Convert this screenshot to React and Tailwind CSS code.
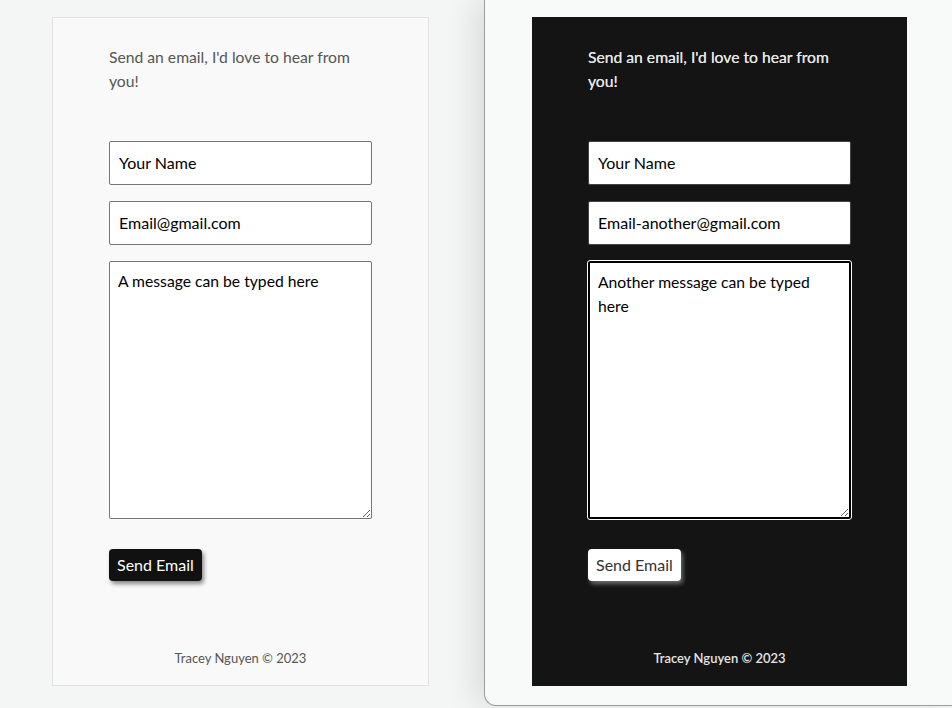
import React from 'react';

const FONT = { fontFamily: 'Lato, "Open Sans", sans-serif' };

function ContactCard({ dark, email, message }) {
  const field = `h-[44px] px-[9px] pb-[2px] text-[16px] text-black bg-white border rounded-[2px] outline-none ${
    dark ? 'border-[#444]' : 'border-[#767676]'
  }`;

  return (
    <div
      className={`flex flex-col h-[669px] ${
        dark
          ? 'w-[375px] pt-[28px] pb-[19px] bg-[#141414]'
          : 'w-[377px] pt-[27px] pb-[18px] bg-[#f9f9f9] border border-[#e2e2e2]'
      }`}
    >
      <div className="pl-[56px]">
        <p
          className={`w-[263px] text-[15.7px] leading-[24px] ${
            dark ? 'text-[#e6e6e6] [text-shadow:0_0_0.4px_#e6e6e6]' : 'text-[#555]'
          }`}
        >
          Send an email, I'd love to hear from you!
        </p>

        <form className="mt-[48px] flex flex-col gap-4 w-[263px]" onSubmit={e => e.preventDefault()}>
          <input type="text" defaultValue="Your Name" className={field} />
          <input type="email" defaultValue={email} className={field} />
          <textarea
            defaultValue={message}
            className={`h-[258px] px-[8px] pt-[7px] pb-[8px] text-[15.7px] leading-[24px] text-black bg-white rounded-[2px] ${
              dark
                ? 'border-2 border-black outline outline-1 outline-white'
                : 'border border-[#767676] outline-none'
            }`}
          />
          <div className="pt-[14px]">
            <button
              type="submit"
              className={`px-2 py-1 text-[16px] leading-[24px] rounded-[4px] ${
                dark
                  ? 'bg-white text-[#333] shadow-[2px_3px_4px_rgba(180,180,180,0.55)]'
                  : 'bg-[#111] text-white shadow-[2px_3px_4px_rgba(0,0,0,0.45)]'
              }`}
            >
              Send Email
            </button>
          </div>
        </form>
      </div>

      <footer
        className={`mt-auto text-center text-[13px] leading-[18px] ${
          dark ? 'text-[#e6e6e6] font-semibold' : 'text-[#555]'
        }`}
      >
        Tracey Nguyen © 2023
      </footer>
    </div>
  );
}

export default function App() {
  return (
    <div style={FONT} className="flex w-[952px] h-[708px] overflow-hidden bg-[#f4f5f5]">
      <div className="w-[484px] shrink-0 pl-[52px] pt-[17px]">
        <ContactCard email="Email@gmail.com" message="A message can be typed here" />
      </div>
      <div className="relative flex-1 h-[706px] bg-[#f8f9f9] border-l border-b border-[#9c9c9c] rounded-bl-[12px] shadow-[-10px_0_30px_rgba(0,0,0,0.10)] pl-[47px] pt-[17px]">
        <ContactCard dark email="Email-another@gmail.com" message="Another message can be typed here" />
      </div>
    </div>
  );
}
